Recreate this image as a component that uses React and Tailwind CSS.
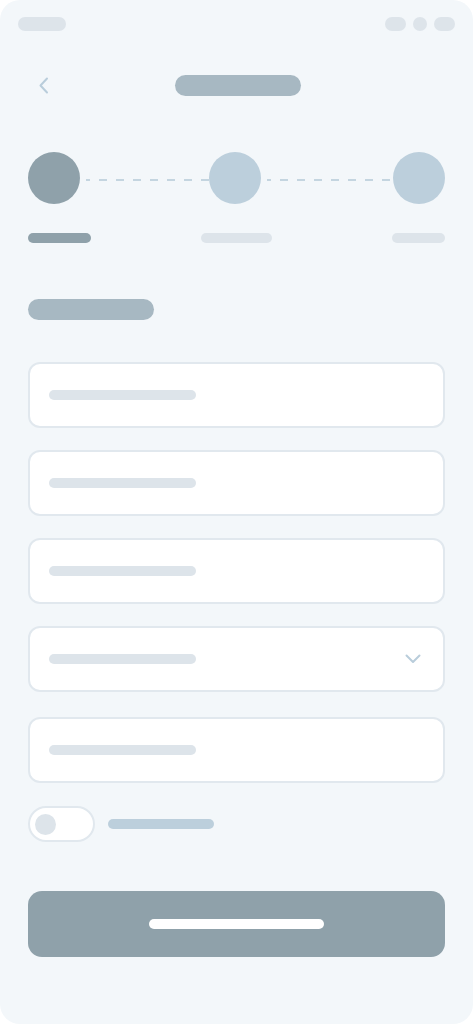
import React from "react";

const Field = ({ select, className = "" }) => (
  <div
    className={`h-[66px] rounded-[12px] border-2 border-[#e1e8ee] bg-white pl-[19px] pr-[22px] flex items-center justify-between ${className}`}
  >
    <div className="w-[147px] h-[10px] rounded-full bg-[#dde4ea]" />
    {select && (
      <svg width="16" height="10" viewBox="0 0 16 10" fill="none">
        <polyline
          points="1.5,1.5 8,8 14.5,1.5"
          stroke="#b9cddb"
          strokeWidth="2"
          strokeLinecap="round"
          strokeLinejoin="round"
        />
      </svg>
    )}
  </div>
);

const Dashes = ({ className = "flex-1" }) => (
  <div className={`h-[2px] ml-[6px] translate-y-[2px] ${className}`}>
    <svg width="100%" height="2" className="block">
      <line
        x1="0"
        y1="1"
        x2="100%"
        y2="1"
        stroke="#c4d5e0"
        strokeWidth="2"
        strokeDasharray="8 9"
        strokeDashoffset="4"
      />
    </svg>
  </div>
);

const App = () => {
  return (
    <div className="w-[473px] h-[1024px] bg-white">
      <div className="h-full rounded-[20px] bg-[#f3f7fa] px-[28px] pt-[17px] flex flex-col">
        {/* status bar */}
        <div className="-mx-[10px] flex items-center justify-between h-[14px]">
          <div className="w-[48px] h-[14px] rounded-full bg-[#dde4ea]" />
          <div className="flex items-center gap-[7px]">
            <div className="w-[21px] h-[14px] rounded-full bg-[#dde4ea]" />
            <div className="w-[14px] h-[14px] rounded-full bg-[#dde4ea]" />
            <div className="w-[21px] h-[14px] rounded-full bg-[#dde4ea]" />
          </div>
        </div>

        {/* header */}
        <div className="mt-[44px] h-[21px] grid grid-cols-[1fr_auto_1fr] items-center">
          <div className="pl-[10px] flex items-center">
            <svg width="12" height="17" viewBox="0 0 12 17" fill="none">
              <polyline
                points="9,1.5 2.5,8.5 9,15.5"
                stroke="#b9cddb"
                strokeWidth="2"
                strokeLinecap="round"
                strokeLinejoin="round"
              />
            </svg>
          </div>
          <div className="w-[126px] h-[21px] rounded-full bg-[#a7b8c2] translate-x-[1px]" />
          <div />
        </div>

        {/* stepper */}
        <div className="mt-[56px] h-[52px] flex items-center">
          <div className="w-[52px] h-[52px] rounded-full bg-[#8fa1aa] shrink-0" />
          <Dashes className="w-[123px] shrink-0" />
          <div className="w-[52px] h-[52px] rounded-full bg-[#bccfdc] shrink-0" />
          <Dashes />
          <div className="w-[52px] h-[52px] rounded-full bg-[#bccfdc] shrink-0" />
        </div>
        <div className="mt-[29px] grid grid-cols-3 items-center h-[10px]">
          <div className="justify-self-start w-[63px] h-[10px] rounded-full bg-[#8fa1aa]" />
          <div className="justify-self-center w-[71px] h-[10px] rounded-full bg-[#dde4ea]" />
          <div className="justify-self-end w-[53px] h-[10px] rounded-full bg-[#dde4ea]" />
        </div>

        {/* section title */}
        <div className="mt-[56px] w-[126px] h-[21px] rounded-full bg-[#a7b8c2]" />

        {/* fields */}
        <div className="mt-[42px] flex flex-col gap-[22px]">
          <Field />
          <Field />
          <Field />
          <Field select />
          <Field className="mt-[3px]" />
        </div>

        {/* toggle */}
        <div className="mt-[23px] flex items-center gap-[13px]">
          <div className="w-[67px] h-[36px] rounded-full border-2 border-[#e1e8ee] bg-white pl-[5px] flex items-center">
            <div className="w-[21px] h-[21px] rounded-full bg-[#dde4ea]" />
          </div>
          <div className="w-[106px] h-[10px] rounded-full bg-[#bccfdc]" />
        </div>

        {/* button */}
        <button className="mt-[49px] h-[66px] rounded-[14px] bg-[#8fa1aa] flex items-center justify-center">
          <div className="w-[175px] h-[10px] rounded-full bg-white" />
        </button>
      </div>
    </div>
  );
};

export default App;
